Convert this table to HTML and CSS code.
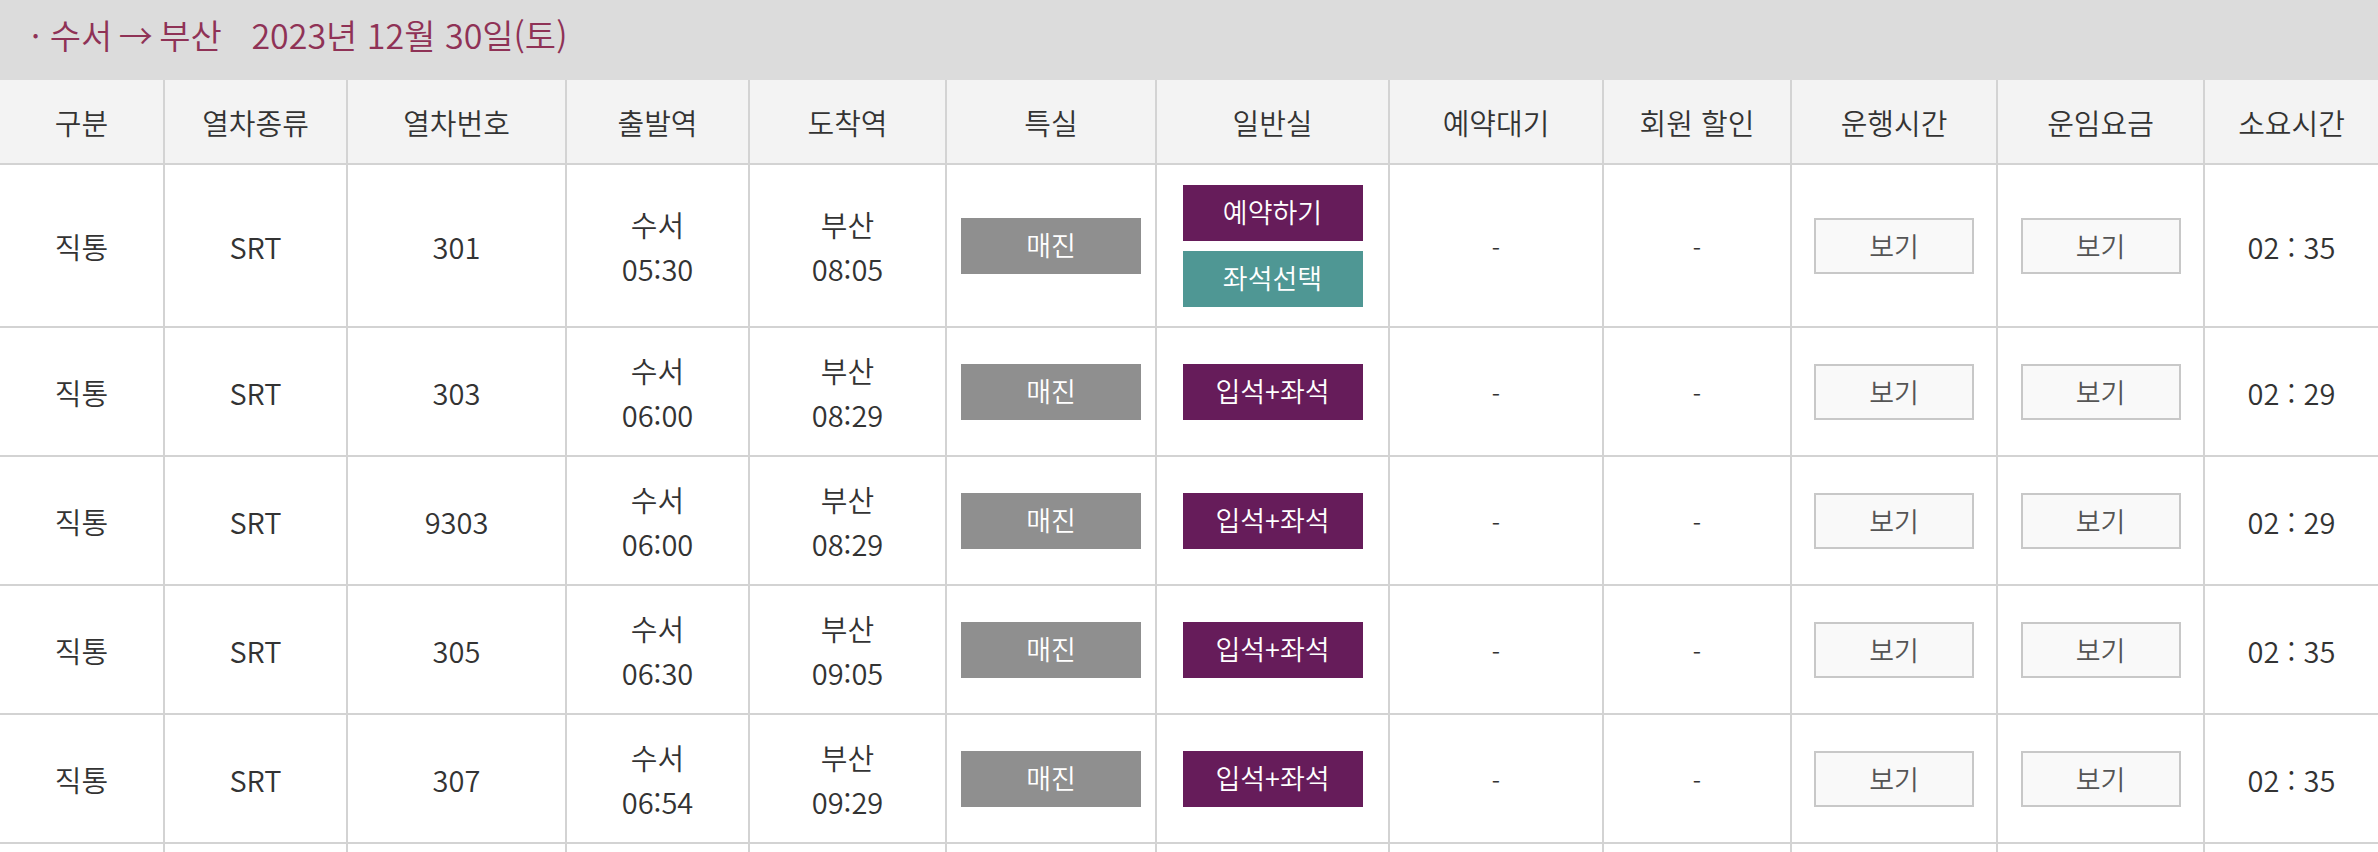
FILE: index.html
```html
<!DOCTYPE html>
<html lang="ko">
<head>
    <meta charset="utf-8">
    <title>SRT 조회 결과</title>
    <link rel="stylesheet" href="styles.css">
</head>
<body>

<div class="page">
    <!-- 구간 / 날짜 -->
    <div class="route-bar">
        <span class="dot">·</span> 수서 <span class="arrow">→</span> 부산 <span class="route-date">2023년 12월 30일(토)</span>
    </div>

    <!-- 조회 결과 -->
    <table class="result-table">
        <colgroup>
            <col style="width: 164px">
            <col style="width: 183px">
            <col style="width: 219px">
            <col style="width: 183px">
            <col style="width: 197px">
            <col style="width: 210px">
            <col style="width: 233px">
            <col style="width: 214px">
            <col style="width: 188px">
            <col style="width: 206px">
            <col style="width: 207px">
            <col style="width: 174px">
        </colgroup>
        <thead>
            <tr>
                <th>구분</th>
                <th>열차종류</th>
                <th>열차번호</th>
                <th>출발역</th>
                <th>도착역</th>
                <th>특실</th>
                <th>일반실</th>
                <th>예약대기</th>
                <th>회원 할인</th>
                <th>운행시간</th>
                <th>운임요금</th>
                <th>소요시간</th>
            </tr>
        </thead>
        <tbody>
            <tr>
                <td>직통</td>
                <td>SRT</td>
                <td>301</td>
                <td>수서<br>05:30</td>
                <td>부산<br>08:05</td>
                <td><a class="btn btn-soldout">매진</a></td>
                <td>
                    <a class="btn btn-reserve">예약하기</a>
                    <a class="btn btn-seat">좌석선택</a>
                </td>
                <td><span class="dash">-</span></td>
                <td><span class="dash">-</span></td>
                <td><a class="btn-view">보기</a></td>
                <td><a class="btn-view">보기</a></td>
                <td>02 : 35</td>
            </tr>
            <tr>
                <td>직통</td>
                <td>SRT</td>
                <td>303</td>
                <td>수서<br>06:00</td>
                <td>부산<br>08:29</td>
                <td><a class="btn btn-soldout">매진</a></td>
                <td><a class="btn btn-reserve">입석+좌석</a></td>
                <td><span class="dash">-</span></td>
                <td><span class="dash">-</span></td>
                <td><a class="btn-view">보기</a></td>
                <td><a class="btn-view">보기</a></td>
                <td>02 : 29</td>
            </tr>
            <tr>
                <td>직통</td>
                <td>SRT</td>
                <td>9303</td>
                <td>수서<br>06:00</td>
                <td>부산<br>08:29</td>
                <td><a class="btn btn-soldout">매진</a></td>
                <td><a class="btn btn-reserve">입석+좌석</a></td>
                <td><span class="dash">-</span></td>
                <td><span class="dash">-</span></td>
                <td><a class="btn-view">보기</a></td>
                <td><a class="btn-view">보기</a></td>
                <td>02 : 29</td>
            </tr>
            <tr>
                <td>직통</td>
                <td>SRT</td>
                <td>305</td>
                <td>수서<br>06:30</td>
                <td>부산<br>09:05</td>
                <td><a class="btn btn-soldout">매진</a></td>
                <td><a class="btn btn-reserve">입석+좌석</a></td>
                <td><span class="dash">-</span></td>
                <td><span class="dash">-</span></td>
                <td><a class="btn-view">보기</a></td>
                <td><a class="btn-view">보기</a></td>
                <td>02 : 35</td>
            </tr>
            <tr>
                <td>직통</td>
                <td>SRT</td>
                <td>307</td>
                <td>수서<br>06:54</td>
                <td>부산<br>09:29</td>
                <td><a class="btn btn-soldout">매진</a></td>
                <td><a class="btn btn-reserve">입석+좌석</a></td>
                <td><span class="dash">-</span></td>
                <td><span class="dash">-</span></td>
                <td><a class="btn-view">보기</a></td>
                <td><a class="btn-view">보기</a></td>
                <td>02 : 35</td>
            </tr>
            <!-- 다음 행 (화면 아래로 이어짐) -->
            <tr class="row-more">
                <td></td><td></td><td></td><td></td><td></td><td></td>
                <td></td><td></td><td></td><td></td><td></td><td></td>
            </tr>
        </tbody>
    </table>
</div>

</body>
</html>
```

FILE: styles.css
```css
/* General Layout */
body {
    margin: 0;
    padding: 0;
    background: #ffffff;
    color: #333333;
    font-family: "Noto Sans CJK KR", "Noto Sans", sans-serif;
}

.page {
    height: 100vh;
    overflow: hidden;
}

/* Route Bar */
.route-bar {
    height: 80px;
    line-height: 70px;
    padding-left: 31px;
    background: #dcdcdc;
    color: #8f3256;
    font-size: 34px;
    font-weight: 350;
}

.route-bar .arrow {
    margin: 0 -3px;
}

.route-date {
    margin-left: 20px;
}

/* Result Table */
.result-table {
    width: 100%;
    table-layout: fixed;
    border-collapse: collapse;
    font-size: 29px;
    font-weight: 350;
    text-align: center;
}

.result-table th,
.result-table td {
    border: 2px solid #d3d3d3;
    padding: 20px 0 19px;
    line-height: 44px;
    vertical-align: middle;
}

.result-table th {
    background: #f3f3f3;
    font-weight: 350;
    color: #333333;
    border-top: none;
}

.result-table th:first-child,
.result-table td:first-child {
    border-left: none;
}

.result-table th:last-child,
.result-table td:last-child {
    border-right: none;
}

.row-more td {
    height: 88px;
}

/* Buttons */
.btn {
    display: block;
    width: 180px;
    height: 56px;
    margin: 0 auto;
    line-height: 54px;
    font-size: 27px;
    color: #ffffff;
    cursor: pointer;
}

.btn + .btn {
    margin-top: 10px;
}

.btn-soldout {
    background: #8f8f8f;
}

.btn-reserve {
    background: #661c5a;
}

.btn-seat {
    background: #4f9794;
}

.btn-view {
    display: block;
    box-sizing: border-box;
    width: 160px;
    height: 56px;
    margin: 0 auto;
    line-height: 52px;
    font-size: 27px;
    color: #555555;
    background: #f9f9f9;
    border: 2px solid #c8c8c8;
    cursor: pointer;
}

.dash {
    font-size: 24px;
}
```
